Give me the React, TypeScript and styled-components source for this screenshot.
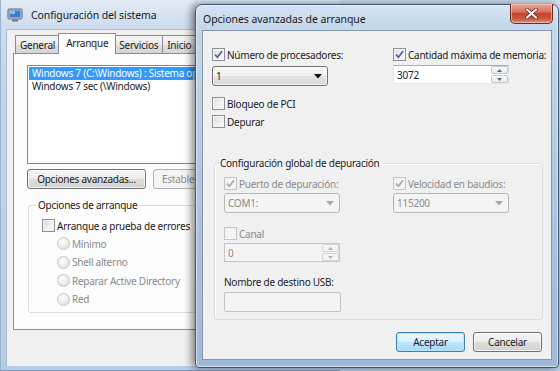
import React from "react";
import styled, { createGlobalStyle, css } from "styled-components";

const Global = createGlobalStyle`
  html, body { margin: 0; padding: 0; }
  body {
    font-family: "Noto Sans", "Segoe UI", sans-serif;
    font-size: 10px;
    letter-spacing: -0.25px;
    color: #1b1b1b;
    background: #bcd1e8;
  }
  * { box-sizing: border-box; }
`;

const Desktop = styled.div`
  position: relative;
  width: 560px;
  height: 371px;
  overflow: hidden;
  background: linear-gradient(180deg, #d2e1f1 0%, #b9cfe7 100%);
`;

/* ---------- background window ---------- */
const BackWindow = styled.div`
  position: absolute;
  z-index: 1;
  left: 0;
  top: 0;
  width: 340px;
  height: 371px;
  display: flex;
  flex-direction: column;
  padding: 0 0 4px 5px;
  background: linear-gradient(180deg, #e3ecf6 0px, #cddcee 26px, #c1d4ea 120px, #b7cde6 100%);
  border-left: 1px solid #9bb3cf;
  border-bottom: 1px solid #7f98b6;
`;

const BackTitle = styled.div`
  height: 29px;
  display: flex;
  align-items: center;
  gap: 8px;
  padding-left: 1px;
  font-size: 10.5px;
  letter-spacing: -0.1px;
  color: #1a1a1a;
`;

const BackClient = styled.div`
  flex: 1;
  background: #f0f0f0;
  border-top: 1px solid #a9bcd2;
  border-left: 1px solid #a9bcd2;
  padding: 3px 0 0 6px;
`;

const TabStrip = styled.div`
  display: flex;
  align-items: flex-end;
  height: 20px;
  padding-left: 3px;
  position: relative;
  z-index: 2;
`;

const Tab = styled.div<{ $active?: boolean }>`
  height: 18px;
  padding: 0 4px;
  display: flex;
  align-items: center;
  border: 1px solid #898c95;
  border-bottom: none;
  margin-left: -1px;
  background: linear-gradient(180deg, #f3f3f3 0%, #ebebeb 50%, #dedede 51%, #d5d5d5 100%);
  color: #1b1b1b;
  white-space: nowrap;
  ${(p) =>
    p.$active &&
    css`
      height: 21px;
      margin: 0 -1px -1px -2px;
      padding: 0 7px 2px;
      background: #fcfcfc;
      position: relative;
      z-index: 1;
    `}
`;

const TabPanel = styled.div`
  height: 277px;
  border: 1px solid #898c95;
  background: #fcfcfc;
  padding: 11px 0 0 13px;
  display: flex;
  flex-direction: column;
  align-items: flex-start;
`;

const ListBox = styled.div`
  width: 260px;
  height: 99px;
  background: #fff;
  border: 1px solid #828790;
  padding: 1px;
`;

const ListItem = styled.div<{ $selected?: boolean }>`
  height: 13px;
  line-height: 13px;
  padding-left: 3px;
  white-space: nowrap;
  ${(p) =>
    p.$selected &&
    css`
      background: #3399ff;
      color: #fff;
    `}
`;

const ButtonRow = styled.div<{ $end?: boolean }>`
  display: flex;
  gap: 7px;
  margin-top: 5px;
  ${(p) =>
    p.$end &&
    css`
      justify-content: flex-end;
      gap: 8px;
      margin-top: 12px;
      margin-right: 1px;
    `}
`;

const Button = styled.button<{ $w?: number; $default?: boolean }>`
  width: ${(p) => p.$w ?? 69}px;
  height: 20px;
  padding: 0;
  font: inherit;
  letter-spacing: inherit;
  color: #1b1b1b;
  border: 1px solid #707070;
  border-radius: 3px;
  background: linear-gradient(180deg, #f4f4f4 0%, #ececec 50%, #dddddd 51%, #d2d2d2 100%);
  box-shadow: inset 0 0 0 1px rgba(255, 255, 255, 0.75);
  white-space: nowrap;
  overflow: hidden;
  text-align: center;
  ${(p) =>
    p.$default &&
    css`
      border-color: #3c7fb1;
      box-shadow: inset 0 0 0 1px #b6e4f9;
      background: linear-gradient(180deg, #eaf6fd 0%, #d9f0fc 50%, #bee6fd 51%, #a7d9f5 100%);
    `}
  &:disabled {
    color: #8d8d8d;
    border-color: #adb2b5;
    background: #f4f4f4;
    box-shadow: none;
    text-align: left;
    padding-left: 8px;
  }
`;

const GroupBox = styled.fieldset<{ $left: number; $pad: number; $bottom: number }>`
  margin: 0 0 0 ${(p) => p.$left}px;
  padding: 5px 0 ${(p) => p.$bottom}px ${(p) => p.$pad}px;
  border: 1px solid #d5dfe5;
  border-radius: 3px;
  box-shadow: inset 1px 1px 0 #fff;
  min-width: 0;
`;

const Legend = styled.legend`
  line-height: 15px;
  padding: 0 2px;
  margin-left: -6px;
  color: #1b1b1b;
`;

const BackGroup = styled(GroupBox)`
  margin-top: 9px;
  width: 300px;
  align-self: flex-start;
`;

const RadioList = styled.div`
  display: flex;
  flex-direction: column;
  gap: 3.5px;
  margin: 3px 0 0 15px;
`;

/* ---------- check / radio ---------- */
const Row = styled.label<{ $disabled?: boolean }>`
  display: flex;
  align-items: center;
  gap: 2px;
  height: 15px;
  white-space: nowrap;
  color: ${(p) => (p.$disabled ? "#8a8a8a" : "#1b1b1b")};
`;

const Box = styled.span<{ $disabled?: boolean }>`
  width: 13px;
  height: 13px;
  flex: none;
  border: 1px solid ${(p) => (p.$disabled ? "#c5c5c5" : "#8e8f8f")};
  background: ${(p) =>
    p.$disabled
      ? "#f4f4f4"
      : "linear-gradient(135deg, #d9dce0 0%, #eef0f2 55%, #fafafa 100%)"};
  box-shadow: inset 0 0 0 1px ${(p) => (p.$disabled ? "#f4f4f4" : "#f5f5f5")};
  display: flex;
  align-items: center;
  justify-content: center;
`;

const RadioDot = styled.span`
  width: 13px;
  height: 13px;
  flex: none;
  border-radius: 50%;
  border: 1px solid #c6c6c6;
  background: radial-gradient(circle at 40% 35%, #ffffff 0%, #eeeeee 45%, #dcdcdc 100%);
`;

const Check = ({ checked, disabled }: { checked?: boolean; disabled?: boolean }) => (
  <Box $disabled={disabled}>
    {checked && (
      <svg width="9" height="9" viewBox="0 0 9 9">
        <path
          d="M1 4.5 L3.4 7.2 L8 1.2"
          fill="none"
          stroke={disabled ? "#a9a9a9" : "#4a5b9c"}
          strokeWidth="1.7"
        />
      </svg>
    )}
  </Box>
);

const CheckRow = ({
  label,
  checked,
  disabled,
  mt = 0,
}: {
  label: string;
  checked?: boolean;
  disabled?: boolean;
  mt?: number;
}) => (
  <Row $disabled={disabled} style={mt ? { marginTop: mt } : undefined}>
    <Check checked={checked} disabled={disabled} />
    <span>{label}</span>
  </Row>
);

const RadioRow = ({ label }: { label: string }) => (
  <Row $disabled>
    <RadioDot />
    <span>{label}</span>
  </Row>
);

/* ---------- inputs ---------- */
const Select = styled.div<{ $disabled?: boolean; $mt: number }>`
  width: 116px;
  height: 20px;
  margin-top: ${(p) => p.$mt}px;
  display: flex;
  align-items: center;
  justify-content: space-between;
  padding: 0 5px 0 3px;
  border: 1px solid #707070;
  border-radius: 3px;
  background: linear-gradient(180deg, #f7f7f7 0%, #efefef 50%, #e3e3e3 51%, #d9d9d9 100%);
  box-shadow: inset 0 0 0 1px rgba(255, 255, 255, 0.7);
  color: #1b1b1b;
  ${(p) =>
    p.$disabled &&
    css`
      border-color: #b5b8bb;
      background: #f4f4f4;
      box-shadow: none;
      color: #8a8a8a;
    `}
`;

const Arrow = ({ disabled }: { disabled?: boolean }) => (
  <svg width="8" height="5" viewBox="0 0 8 5">
    <path d="M0 0 H8 L4 4.5 Z" fill={disabled ? "#a7a7a7" : "#111"} />
  </svg>
);

const Spin = styled.div<{ $disabled?: boolean; $mt: number }>`
  width: 116px;
  height: 19px;
  margin-top: ${(p) => p.$mt}px;
  display: flex;
  align-items: stretch;
  border: 1px solid #abadb3;
  border-left-color: #e2e3ea;
  border-bottom-color: #e3e9ef;
  border-right-color: #dbdfe6;
  background: ${(p) => (p.$disabled ? "#f4f4f4" : "#fff")};
  color: ${(p) => (p.$disabled ? "#8a8a8a" : "#1b1b1b")};
  ${(p) =>
    p.$disabled &&
    css`
      border-color: #c6c6c6;
    `}
`;

const SpinText = styled.span`
  flex: 1;
  display: flex;
  align-items: center;
  padding-left: 3px;
`;

const SpinButtons = styled.div`
  width: 17px;
  display: flex;
  flex-direction: column;
  gap: 1px;
`;

const SpinBtn = styled.div<{ $disabled?: boolean }>`
  flex: 1;
  display: flex;
  align-items: center;
  justify-content: center;
  border: 1px solid ${(p) => (p.$disabled ? "#d4d4d4" : "#c4c8cf")};
  border-radius: 2px;
  background: ${(p) =>
    p.$disabled ? "#f4f4f4" : "linear-gradient(180deg, #fafafa, #e6e9ee)"};
`;

const SpinArrow = ({ up, disabled }: { up?: boolean; disabled?: boolean }) => (
  <svg width="5" height="3" viewBox="0 0 5 3">
    <path d={up ? "M0 3 H5 L2.5 0 Z" : "M0 0 H5 L2.5 3 Z"} fill={disabled ? "#b0b0b0" : "#5a6270"} />
  </svg>
);

const SpinBox = ({ value, disabled, mt }: { value: string; disabled?: boolean; mt: number }) => (
  <Spin $disabled={disabled} $mt={mt}>
    <SpinText>{value}</SpinText>
    <SpinButtons>
      <SpinBtn $disabled={disabled}>
        <SpinArrow up disabled={disabled} />
      </SpinBtn>
      <SpinBtn $disabled={disabled}>
        <SpinArrow disabled={disabled} />
      </SpinBtn>
    </SpinButtons>
  </Spin>
);

const TextField = styled.div`
  width: 117px;
  height: 20px;
  margin-top: 3px;
  border: 1px solid #c3c3c3;
  border-radius: 2px;
  background: #f4f4f4;
`;

const FieldLabel = styled.div<{ $mt: number }>`
  margin-top: ${(p) => p.$mt}px;
  line-height: 14px;
  height: 14px;
`;

/* ---------- dialog ---------- */
const Dialog = styled.div`
  position: absolute;
  z-index: 5;
  left: 195px;
  top: 4px;
  width: 364px;
  height: 364px;
  display: flex;
  flex-direction: column;
  padding: 0 6px 7px 6px;
  border: 1px solid #3e5573;
  border-radius: 7px 7px 4px 4px;
  background: linear-gradient(180deg, #d5e3f2 0px, #c3d6eb 24px, #aac3de 60%, #9fbad8 100%);
  box-shadow: -3px 0 9px rgba(0, 0, 0, 0.5), inset 0 0 0 1px rgba(255, 255, 255, 0.55);
`;

const DialogTitle = styled.div`
  height: 25px;
  display: flex;
  align-items: center;
  padding: 2px 0 0 1px;
  font-size: 10.5px;
  letter-spacing: -0.05px;
  color: #1a1a1a;
`;

const CloseBtn = styled.div`
  position: absolute;
  top: -1px;
  right: 5px;
  width: 43px;
  height: 20px;
  display: flex;
  align-items: center;
  justify-content: center;
  border: 1px solid #6d2b20;
  border-top: none;
  border-radius: 0 0 5px 5px;
  background: linear-gradient(180deg, #e9a795 0%, #d9735c 40%, #c7402a 52%, #cd5e45 80%, #e09680 100%);
  box-shadow: inset 0 0 0 1px rgba(255, 220, 210, 0.5);
`;

const DialogBody = styled.div`
  flex: 1;
  background: #f0f0f0;
  border: 1px solid #8497ae;
  padding: 16px 8px 0 9px;
  display: flex;
  flex-direction: column;
`;

const TwoCols = styled.div<{ $first: number }>`
  display: grid;
  grid-template-columns: ${(p) => p.$first}px 1fr;
  align-items: start;
`;

const Col = styled.div`
  display: flex;
  flex-direction: column;
  align-items: flex-start;
`;

const DebugGroup = styled(GroupBox)`
  margin-top: 27px;
`;

const SysIcon = () => (
  <svg width="16" height="14" viewBox="0 0 16 14">
    <rect x="1" y="1" width="14" height="10" rx="1" fill="#c9ced6" stroke="#5b6675" />
    <rect x="2.5" y="2.5" width="11" height="7" fill="#3f7fcf" />
    <rect x="3" y="3" width="5" height="3" fill="#8fc1f0" />
    <rect x="5" y="11.5" width="6" height="2" fill="#6b7584" />
  </svg>
);

const CloseX = () => (
  <svg width="13" height="11" viewBox="0 0 13 11">
    <path d="M2 1.5 L11 9.5 M11 1.5 L2 9.5" stroke="#5a1a10" strokeWidth="3.6" strokeLinecap="round" />
    <path d="M2 1.5 L11 9.5 M11 1.5 L2 9.5" stroke="#ffffff" strokeWidth="2.2" strokeLinecap="round" />
  </svg>
);

export default function App() {
  return (
    <Desktop>
      <Global />
      <BackWindow>
        <BackTitle>
          <SysIcon />
          <span>Configuración del sistema</span>
        </BackTitle>
        <BackClient>
          <TabStrip>
            <Tab>General</Tab>
            <Tab $active>Arranque</Tab>
            <Tab>Servicios</Tab>
            <Tab>Inicio</Tab>
          </TabStrip>
          <TabPanel>
            <ListBox>
              <ListItem $selected>Windows 7 (C:\Windows) : Sistema operativo actual</ListItem>
              <ListItem>Windows 7 sec (\Windows)</ListItem>
            </ListBox>
            <ButtonRow>
              <Button $w={119}>Opciones avanzadas...</Button>
              <Button $w={110} disabled>
                Establecer como predeterminado
              </Button>
            </ButtonRow>
            <BackGroup $left={1} $pad={13} $bottom={5}>
              <Legend>Opciones de arranque</Legend>
              <CheckRow label="Arranque a prueba de errores" />
              <RadioList>
                <RadioRow label="Mínimo" />
                <RadioRow label="Shell alterno" />
                <RadioRow label="Reparar Active Directory" />
                <RadioRow label="Red" />
              </RadioList>
            </BackGroup>
          </TabPanel>
        </BackClient>
      </BackWindow>

      <Dialog>
        <DialogTitle>Opciones avanzadas de arranque</DialogTitle>
        <CloseBtn>
          <CloseX />
        </CloseBtn>
        <DialogBody>
          <TwoCols $first={181}>
            <Col>
              <CheckRow label="Número de procesadores:" checked />
              <Select $mt={4}>
                <span>1</span>
                <Arrow />
              </Select>
              <CheckRow label="Bloqueo de PCI" mt={10} />
              <CheckRow label="Depurar" mt={3} />
            </Col>
            <Col>
              <CheckRow label="Cantidad máxima de memoria:" checked />
              <SpinBox value="3072" mt={3} />
            </Col>
          </TwoCols>
          <DebugGroup $left={2} $pad={9} $bottom={7}>
            <Legend>Configuración global de depuración</Legend>
            <TwoCols $first={169}>
              <Col>
                <CheckRow label="Puerto de depuración:" checked disabled />
                <Select $mt={2} $disabled>
                  <span>COM1:</span>
                  <Arrow disabled />
                </Select>
                <CheckRow label="Canal" disabled mt={13} />
                <SpinBox value="0" disabled mt={2} />
                <FieldLabel $mt={13}>Nombre de destino USB:</FieldLabel>
                <TextField />
              </Col>
              <Col>
                <CheckRow label="Velocidad en baudios:" checked disabled />
                <Select $mt={2} $disabled>
                  <span>115200</span>
                  <Arrow disabled />
                </Select>
              </Col>
            </TwoCols>
          </DebugGroup>
          <ButtonRow $end>
            <Button $default>Aceptar</Button>
            <Button>Cancelar</Button>
          </ButtonRow>
        </DialogBody>
      </Dialog>
    </Desktop>
  );
}
